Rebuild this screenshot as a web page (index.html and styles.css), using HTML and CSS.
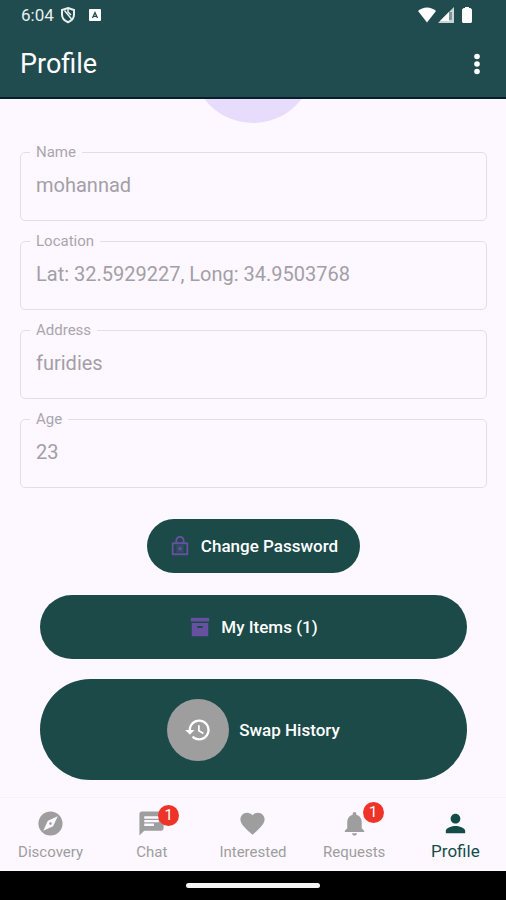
FILE: index.html
```html
<!DOCTYPE html>
<html lang="en">
<head>
<meta charset="utf-8">
<meta name="viewport" content="width=device-width, initial-scale=1">
<title>Profile</title>
<link rel="stylesheet" href="styles.css">
</head>
<body>
<header class="top">
  <div class="status">
    <span class="clock">6:04</span>
    <svg class="shield" viewBox="0 0 16 18" aria-hidden="true"><path d="M8 2 14 4v4.500c0 3.500-2.500 6.300-6 7.700-3.500-1.400-6-4.200-6-7.700V4z" fill="none" stroke="currentColor" stroke-width="2"/><path d="M4.500 4.500 11.500 13M8 3v3l3 3" fill="none" stroke="currentColor" stroke-width="1.500"/></svg>
    <svg class="app" viewBox="0 0 12 12" aria-hidden="true"><rect width="12" height="12" rx="1" fill="currentColor"/><path d="M3.500 9 6 3.500 8.500 9M4.500 7.300h3" fill="none" stroke="#204b4f" stroke-width="1.300"/></svg>
    <span class="system">
      <svg class="wifi" viewBox="0 0 18 16" aria-hidden="true"><path d="M0 4C5-.7 13-.7 18 4L9 15.500z" fill="currentColor"/></svg>
      <svg class="signal" viewBox="0 0 16 16" aria-hidden="true"><path d="M16 0v16H0z" fill="#c9d4d4"/><path d="M11 5v9H2z" fill="currentColor"/><path d="M11 5h3v8h-3z" fill="#7d9697"/></svg>
      <svg class="battery" viewBox="0 0 10 16" aria-hidden="true"><path d="M3 0h4v1h1.500L10 2.500V15l-1 1H1l-1-1V2.500L1.500 1H3z" fill="currentColor"/></svg>
    </span>
  </div>
  <div class="bar">
    <h1 class="title">Profile</h1>
    <button class="more" type="button" aria-label="More options">
      <svg viewBox="0 0 6 22" aria-hidden="true"><g fill="currentColor"><circle cx="3" cy="3.500" r="2.800"/><circle cx="3" cy="11" r="2.800"/><circle cx="3" cy="18.500" r="2.800"/></g></svg>
    </button>
  </div>
</header>
<main class="content">
  <div class="avatar"></div>
  <form class="fields">
    <fieldset class="field"><legend><label for="name">Name</label></legend><input id="name" type="text" value="mohannad" disabled></fieldset>
    <fieldset class="field"><legend><label for="location">Location</label></legend><input id="location" type="text" value="Lat: 32.5929227, Long: 34.9503768" disabled></fieldset>
    <fieldset class="field"><legend><label for="address">Address</label></legend><input id="address" type="text" value="furidies" disabled></fieldset>
    <fieldset class="field"><legend><label for="age">Age</label></legend><input id="age" type="text" value="23" disabled></fieldset>
  </form>
  <div class="actions">
    <button class="action password" type="button">
      <svg class="icon" viewBox="0 0 24 24" aria-hidden="true"><path fill-rule="evenodd" d="M18 8h-1V6c0-2.760-2.240-5-5-5S7 3.240 7 6v2H4c-.6 0-1 .4-1 1v12c0 .6.4 1 1 1h16c.6 0 1-.4 1-1V9c0-.6-.4-1-1-1zM9 6c0-1.710 1.390-3 3-3s3 1.290 3 3v2H9zM5 10h14v10H5z"/><path fill-rule="evenodd" d="M8 11h8v8H8zM10.500 13.500v3h3v-3z" opacity=".35"/><circle cx="12" cy="15" r="2"/></svg>
      Change Password
    </button>
    <button class="action items" type="button">
      <svg class="icon" viewBox="0 0 24 24" aria-hidden="true"><path d="M2 2h20v4H2z"/><path d="M3 7.500h18V22H3zM9 11v2h6v-2z" fill-rule="evenodd"/></svg>
      My Items (1)
    </button>
    <button class="action history" type="button">
      <span class="disc"><svg viewBox="0 0 24 24" aria-hidden="true"><path d="M13 3c-4.970 0-9 4.030-9 9H1l3.890 3.890.07.140L9 12H6c0-3.870 3.130-7 7-7s7 3.130 7 7-3.130 7-7 7c-1.930 0-3.680-.79-4.940-2.060l-1.420 1.420C8.270 19.990 10.510 21 13 21c4.970 0 9-4.030 9-9s-4.030-9-9-9zm-1 5v5l4.280 2.540.72-1.210-3.500-2.080V8H12z"/></svg></span>
      Swap History
    </button>
  </div>
</main>
<nav class="tabs">
  <a class="tab" href="#discovery">
    <span class="glyph"><svg viewBox="0 0 24 24" aria-hidden="true"><path d="M12 10.900c-.61 0-1.100.49-1.100 1.100s.49 1.100 1.100 1.100 1.100-.49 1.100-1.100-.49-1.100-1.100-1.100zM12 2C6.480 2 2 6.480 2 12s4.480 10 10 10 10-4.480 10-10S17.520 2 12 2zm2.190 12.190L6 18l3.810-8.190L18 6l-3.810 8.190z"/></svg></span>
    Discovery
  </a>
  <a class="tab" href="#chat">
    <span class="glyph"><svg viewBox="0 0 24 24" aria-hidden="true"><path d="M20 2H4c-1.100 0-1.990.9-1.990 2L2 22l4-4h14c1.100 0 2-.9 2-2V4c0-1.100-.9-2-2-2zM6 9h12v2H6V9zm8 5H6v-2h8v2zm4-6H6V6h12v2z"/></svg><span class="badge">1</span></span>
    Chat
  </a>
  <a class="tab" href="#interested">
    <span class="glyph"><svg viewBox="0 0 24 24" aria-hidden="true"><path d="M12 21.350l-1.450-1.320C5.400 15.360 2 12.280 2 8.500 2 5.420 4.420 3 7.500 3c1.740 0 3.410.81 4.500 2.090C13.090 3.810 14.760 3 16.500 3 19.580 3 22 5.420 22 8.500c0 3.780-3.400 6.860-8.550 11.540L12 21.350z"/></svg></span>
    Interested
  </a>
  <a class="tab" href="#requests">
    <span class="glyph"><svg viewBox="0 0 24 24" aria-hidden="true"><path d="M12 22c1.100 0 2-.9 2-2h-4c0 1.100.89 2 2 2zm6-6v-5c0-3.070-1.640-5.640-4.500-6.320V4c0-.83-.67-1.500-1.500-1.500s-1.500.67-1.500 1.500v.68C7.630 5.360 6 7.920 6 11v5l-2 2v1h16v-1l-2-2z"/></svg><span class="badge raised">1</span></span>
    Requests
  </a>
  <a class="tab current" href="#profile" aria-current="page">
    <span class="glyph"><svg viewBox="0 0 24 24" aria-hidden="true"><path d="M12 12c2.210 0 4-1.790 4-4s-1.790-4-4-4-4 1.790-4 4 1.790 4 4 4zm0 2c-2.670 0-8 1.340-8 4v2h16v-2c0-2.660-5.330-4-8-4z"/></svg></span>
    Profile
  </a>
</nav>
<footer class="gesture"><span class="handle"></span></footer>
</body>
</html>
```
FILE: styles.css
```css
* { box-sizing: border-box; }
body {
  margin: 0;
  min-height: 100vh;
  display: flex;
  flex-direction: column;
  background: #fdf7ff;
  font-family: Roboto, sans-serif;
}
svg { display: block; fill: currentColor; }
button { border: 0; font: inherit; }

.top {
  background: #204b4f;
  border-bottom: 2px solid #071d2b;
  color: #fff;
}
.status {
  display: flex;
  align-items: center;
  height: 30px;
  padding: 0 34px 0 21px;
}
.clock { font-size: 17px; line-height: 20px; color: #e9f0f0; }
.shield { width: 16px; height: 18px; margin-left: 6px; color: #e9f0f0; }
.app { width: 12px; height: 12px; margin-left: 13px; }
.system { display: flex; align-items: center; margin-left: auto; }
.wifi { width: 18px; height: 16px; }
.signal { width: 16px; height: 16px; margin-left: 2px; }
.battery { width: 10px; height: 16px; margin-left: 8px; }
.bar {
  display: flex;
  align-items: center;
  justify-content: space-between;
  height: 67px;
  padding: 0 20px;
}
.title { margin: 0; font-size: 27px; line-height: 32px; font-weight: 400; }
.more { padding: 0 6px; background: none; color: #fff; }
.more svg { width: 6px; height: 22px; }

.content { flex: 1; overflow: hidden; }
.avatar {
  width: 122px;
  height: 122px;
  margin: -98px auto 0;
  border-radius: 50%;
  background: #e8dcfd;
}
.fields { padding: 20px 19px 0 20px; }
.field {
  min-width: 0;
  margin: 0 0 11px;
  padding: 0 9px 11px;
  border: 1px solid #e3dde7;
  border-radius: 5px;
}
.field legend {
  padding: 0 6px;
  font-size: 15px;
  line-height: 18px;
  color: #aaa5ae;
}
.field label { display: block; }
.field input {
  display: block;
  width: 100%;
  height: 48px;
  padding: 0 6px;
  border: 0;
  background: none;
  font: 20px/24px Roboto, sans-serif;
  color: #a39fa7;
}
.actions {
  display: flex;
  flex-direction: column;
  gap: 20px;
  padding: 20px 39px 16px 40px;
}
.action {
  display: flex;
  align-items: center;
  justify-content: center;
  gap: 10px;
  padding: 0 22px;
  border-radius: 52px;
  background: #1b4a49;
  color: #fff;
  font-size: 17px;
  line-height: 20px;
  font-weight: 500;
}
.icon { width: 22px; height: 22px; color: #67509f; }
.password { align-self: center; height: 54px; margin-bottom: 2px; }
.items { height: 64px; }
.history { height: 101px; }
.disc {
  display: grid;
  place-items: center;
  width: 62px;
  height: 62px;
  border-radius: 50%;
  background: #9e9e9e;
}
.disc svg { width: 28px; height: 28px; }

.tabs {
  display: grid;
  grid-template-columns: repeat(5, 1fr);
  height: 74px;
  border-top: 1px solid #f6f0f7;
}
.tab {
  display: flex;
  flex-direction: column;
  align-items: center;
  gap: 4px;
  padding-top: 11px;
  color: #9e9e9e;
  font-size: 15px;
  line-height: 20px;
  text-decoration: none;
}
.glyph { position: relative; }
.glyph svg { width: 29px; height: 29px; }
.current { gap: 3px; color: #144c48; font-size: 17px; }
.badge {
  position: absolute;
  top: -4px;
  right: -13px;
  width: 21px;
  height: 21px;
  border-radius: 50%;
  background: #ee3429;
  color: #fff;
  font-size: 15px;
  line-height: 21px;
  text-align: center;
}
.raised { top: -7px; right: -15px; }
.gesture {
  display: grid;
  place-items: center;
  height: 29px;
  background: #000;
}
.handle { width: 134px; height: 5px; border-radius: 3px; background: #f4f4f4; }
```
